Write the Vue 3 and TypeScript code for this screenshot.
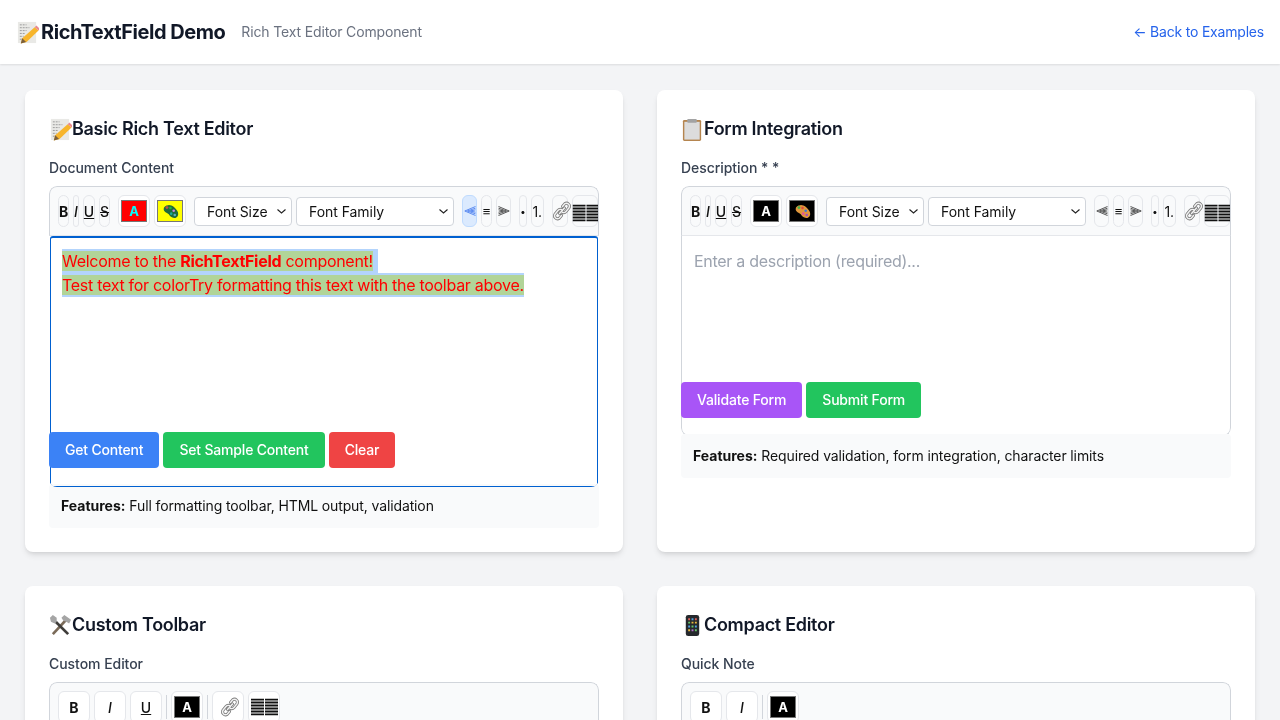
<script setup lang="ts">
type Tool =
  | { kind: 'text'; label: string; cls: string }
  | { kind: 'color'; mode: 'text' | 'back'; bg: string }
  | { kind: 'select'; label: string; cls: string; options: string[] }
  | { kind: 'icon'; icon: string; cls: string; active?: boolean }
  | { kind: 'divider' }

type Panel = {
  icon: string
  title: string
  label: string
  compact: boolean
  tools: Tool[]
  focused?: boolean
  placeholder?: string
  actions: { text: string; color: string }[]
  features?: string
}

const sizes = ['Font Size', 'Small', 'Normal', 'Large', 'Huge']
const families = ['Font Family', 'Inter', 'Roboto', 'Lato', 'Open Sans']

const fullToolbar = (fore: string, back: string, alignActive: boolean): Tool[] => [
  { kind: 'text', label: 'B', cls: 'w-b bold' },
  { kind: 'text', label: 'I', cls: 'w-i italic' },
  { kind: 'text', label: 'U', cls: 'w-u under' },
  { kind: 'text', label: 'S', cls: 'w-s strike' },
  { kind: 'color', mode: 'text', bg: fore },
  { kind: 'color', mode: 'back', bg: back },
  { kind: 'select', label: 'size', cls: 'sel-size', options: sizes },
  { kind: 'select', label: 'family', cls: 'sel-family', options: families },
  { kind: 'icon', icon: 'al', cls: 'w-al', active: alignActive },
  { kind: 'text', label: '≡', cls: 'w-ac center-glyph' },
  { kind: 'icon', icon: 'ar', cls: 'w-ar' },
  { kind: 'text', label: '•', cls: 'w-ul list-start dot' },
  { kind: 'text', label: '1.', cls: 'w-ol' },
  { kind: 'icon', icon: 'link', cls: 'w-link list-start' },
  { kind: 'icon', icon: 'table', cls: 'w-table' },
]

const panels: Panel[] = [
  {
    icon: 'memo',
    title: 'Basic Rich Text Editor',
    label: 'Document Content',
    compact: false,
    focused: true,
    tools: fullToolbar('#ff0000', '#ffff00', true),
    actions: [
      { text: 'Get Content', color: '#3b82f6' },
      { text: 'Set Sample Content', color: '#22c55e' },
      { text: 'Clear', color: '#ef4444' },
    ],
    features: 'Full formatting toolbar, HTML output, validation',
  },
  {
    icon: 'clipboard',
    title: 'Form Integration',
    label: 'Description * *',
    compact: true,
    placeholder: 'Enter a description (required)...',
    tools: fullToolbar('#000000', '#000000', false),
    actions: [
      { text: 'Validate Form', color: '#a855f7' },
      { text: 'Submit Form', color: '#22c55e' },
    ],
    features: 'Required validation, form integration, character limits',
  },
  {
    icon: 'tools',
    title: 'Custom Toolbar',
    label: 'Custom Editor',
    compact: true,
    tools: [
      { kind: 'text', label: 'B', cls: 'wide bold' },
      { kind: 'text', label: 'I', cls: 'wide italic' },
      { kind: 'text', label: 'U', cls: 'wide under' },
      { kind: 'divider' },
      { kind: 'color', mode: 'text', bg: '#000000' },
      { kind: 'divider' },
      { kind: 'icon', icon: 'link', cls: 'wide' },
      { kind: 'icon', icon: 'table', cls: 'wide' },
    ],
    actions: [],
  },
  {
    icon: 'phone',
    title: 'Compact Editor',
    label: 'Quick Note',
    compact: true,
    tools: [
      { kind: 'text', label: 'B', cls: 'wide bold' },
      { kind: 'text', label: 'I', cls: 'wide italic' },
      { kind: 'divider' },
      { kind: 'color', mode: 'text', bg: '#000000' },
    ],
    actions: [],
  },
]
</script>

<template>
  <svg class="defs" aria-hidden="true">
    <defs>
      <symbol id="memo" viewBox="0 0 24 24">
        <rect x="2" y="1" width="19" height="22" fill="#e9e9e6" />
        <path d="M4 4h7M4 7h10M4 10h7M4 13h5M4 16h4M4 19h3" stroke="#9a9a9a" stroke-width="1" stroke-dasharray="2 1" />
        <path d="M19.500 6.500l4 3.500L11 22l-6 1.500 1.500-5.500z" fill="#f7b52c" />
        <path d="M19.500 6.500l1.800-1.800 3.700 3.500-1.500 1.800z" fill="#e98a8f" />
        <path d="M6.500 18L5 23.500l5.500-1.500z" fill="#7a5f3c" />
      </symbol>
      <symbol id="clipboard" viewBox="0 0 24 24">
        <rect x="2" y="2" width="19" height="22" rx="1.500" fill="#b5854f" />
        <rect x="3.500" y="4" width="16" height="18.500" fill="#dcdcdc" />
        <rect x="6.500" y="1" width="10" height="4" rx="1" fill="#a3a3a3" />
      </symbol>
      <symbol id="tools" viewBox="0 0 24 24">
        <path d="M3 20L17 5l2 2L5 22z" fill="#7a6a58" />
        <path d="M13 4l3-3 7 5-2 4-3-2-3-1z" fill="#a5a5a5" />
        <path d="M21 20L8 7 6 9l13 13z" fill="#3f3d3a" />
        <path d="M1 4l3-3 4 3v4L6 10 2 8z" fill="#a5a5a5" />
      </symbol>
      <symbol id="phone" viewBox="0 0 24 24">
        <rect x="5" y="1" width="14" height="22" rx="2.500" fill="#25282c" />
        <path d="M7.500 4.500h2v2h-2zM14.500 4.500h2v2h-2z" fill="#e0605a" />
        <path d="M11 4.500h2v2h-2zM7.500 12h2v2h-2zM14.500 12h2v2h-2z" fill="#4fa3e0" />
        <path d="M7.500 8h2v2h-2zM11 12h2v2h-2zM14.500 16h2v2h-2z" fill="#67c46a" />
        <path d="M11 8h2v2h-2zM14.500 8h2v2h-2zM7.500 16h2v2h-2z" fill="#e8b93f" />
        <path d="M11 16h2v2h-2z" fill="#b46fd0" />
      </symbol>
      <symbol id="palette" viewBox="0 0 24 24">
        <path d="M9 3C4 3 1 7 3 11c1.500 3 5 3 6.500 5 1.500 3 5 6 9.500 5 4-1 5-6 2.500-10C19 7 14 2.500 9 3z" fill="#e0973c" />
        <circle cx="7" cy="6.500" r="2" fill="#3fb24d" />
        <circle cx="12" cy="7" r="1.800" fill="#e0483f" />
        <circle cx="16.500" cy="11" r="1.800" fill="#3c78d8" />
        <circle cx="13" cy="15" r="1.800" fill="#e8549a" />
        <circle cx="18" cy="17" r="1.800" fill="#a44fc0" />
      </symbol>
      <symbol id="al" viewBox="0 0 12 10">
        <path d="M11.500.5L.8 5l10.700 4.500M11.500 2.200L3.500 5l8 2.800M11.500 3.800L6.500 5l5 1.200" fill="none" stroke="currentColor" stroke-width=".7" />
      </symbol>
      <symbol id="ar" viewBox="0 0 12 10">
        <path d="M.5.500L11.200 5 .5 9.500M.5 2.200L8.500 5l-8 2.800M.5 3.800L5.500 5l-5 1.200" fill="none" stroke="currentColor" stroke-width=".7" />
      </symbol>
      <symbol id="link" viewBox="0 0 20 20">
        <path d="M10.500 5.500l2.200-2.700a3 3 0 0 1 4.300 4l-3 3.700a3 3 0 0 1-3.600.8M9.500 14.500l-2.200 2.700a3 3 0 0 1-4.300-4l3-3.700a3 3 0 0 1 3.600-.8M7.500 12.500l5-5.500" fill="none" stroke="#7c7c7c" stroke-width="3" stroke-linecap="round" />
        <path d="M10.500 5.500l2.200-2.700a3 3 0 0 1 4.300 4l-3 3.700a3 3 0 0 1-3.600.8M9.500 14.500l-2.200 2.700a3 3 0 0 1-4.300-4l3-3.700a3 3 0 0 1 3.600-.8M7.500 12.500l5-5.500" fill="none" stroke="#f2f2f2" stroke-width="1.400" stroke-linecap="round" />
      </symbol>
      <symbol id="table" viewBox="0 0 27 17">
        <path d="M0 1h13M14 1h13M0 4h13M14 4h13M0 7h13M14 7h13M0 10h13M14 10h13M0 13h13M14 13h13M0 16h13M14 16h13" stroke="#111" stroke-width="2" />
      </symbol>
    </defs>
  </svg>

  <div class="page">
    <header class="top">
      <div class="brand">
        <svg class="emoji-lg"><use href="#memo" /></svg>
        <h1>RichTextField Demo</h1>
        <span class="tagline">Rich Text Editor Component</span>
      </div>
      <a class="back" href="#">← Back to Examples</a>
    </header>

    <main class="grid">
      <section v-for="panel in panels" :key="panel.title" class="card">
        <h2 class="card-title">
          <svg class="emoji"><use :href="'#' + panel.icon" /></svg>{{ panel.title }}
        </h2>
        <label class="field-label">{{ panel.label }}</label>

        <div class="editor" :class="{ tall: !panel.compact }">
          <div class="toolbar" :class="{ loose: panel.tools.length < 10 }">
            <template v-for="(tool, i) in panel.tools" :key="i">
              <button v-if="tool.kind === 'text'" type="button" class="tool" :class="tool.cls">{{ tool.label }}</button>
              <button
                v-else-if="tool.kind === 'icon'"
                type="button"
                class="tool"
                :class="[tool.cls, { active: tool.active }]"
              >
                <svg :class="'ico-' + tool.icon"><use :href="'#' + tool.icon" /></svg>
              </button>
              <span v-else-if="tool.kind === 'color'" class="color" :class="{ first: tool.mode === 'text' }">
                <span class="swatch" :style="{ background: tool.bg }">
                  <b v-if="tool.mode === 'text'" class="blend">A</b>
                  <svg v-else class="blend palette"><use href="#palette" /></svg>
                </span>
              </span>
              <select v-else-if="tool.kind === 'select'" class="select" :class="tool.cls" :aria-label="tool.label">
                <option v-for="opt in tool.options" :key="opt">{{ opt }}</option>
              </select>
              <span v-else class="divider"></span>
            </template>
          </div>
          <div class="content" :class="{ focused: panel.focused }">
            <template v-if="panel.focused">
              <div class="sel-line trail">
                <span class="mark">Welcome to the <strong>RichTextField</strong> component!</span>
              </div>
              <div class="sel-line">
                <span class="mark">Test text for colorTry formatting this text with the toolbar above.</span>
              </div>
            </template>
            <p v-else-if="panel.placeholder" class="placeholder">{{ panel.placeholder }}</p>
          </div>
        </div>

        <div v-if="panel.actions.length" class="actions">
          <button
            v-for="action in panel.actions"
            :key="action.text"
            type="button"
            class="action"
            :style="{ background: action.color }"
          >
            {{ action.text }}
          </button>
        </div>

        <p v-if="panel.features" class="features"><strong>Features:</strong> {{ panel.features }}</p>
      </section>
    </main>
  </div>
</template>

<style>
html,
body {
  margin: 0;
  overflow: hidden;
  background: #f3f4f6;
}
</style>

<style scoped>
.defs {
  position: absolute;
  width: 0;
  height: 0;
}

.page {
  min-height: 720px;
  background: #f3f4f6;
  color: #111827;
  font-family: Inter, 'Noto Sans', sans-serif;
}

.top {
  display: flex;
  align-items: center;
  justify-content: space-between;
  height: 64px;
  padding: 0 16px;
  background: #fff;
  box-shadow: 0 1px 2px rgb(0 0 0 / 10%);
}

.brand {
  display: flex;
  align-items: center;
}

.emoji-lg {
  flex: none;
  width: 23px;
  height: 23px;
  margin-right: 2px;
}

.brand h1 {
  margin: 0;
  font-size: 20px;
  font-weight: 700;
  letter-spacing: -0.46px;
  line-height: 28px;
}

.tagline {
  margin: 0 0 1px 16px;
  color: #6b7280;
  font-size: 14px;
  letter-spacing: -0.15px;
}

.back {
  margin-bottom: 1px;
  color: #2563eb;
  font-size: 14px;
  letter-spacing: -0.2px;
  text-decoration: none;
}

.grid {
  display: grid;
  grid-template-columns: 598px 598px;
  gap: 34px;
  padding: 26px 25px 25px;
}

.card {
  display: flex;
  flex-direction: column;
  align-items: stretch;
  padding: 24px;
  border-radius: 8px;
  background: #fff;
  box-shadow:
    0 4px 6px -1px rgb(0 0 0 / 10%),
    0 2px 4px -2px rgb(0 0 0 / 10%);
}

.card-title {
  display: flex;
  align-items: center;
  margin: 1px 0 15px;
  font-size: 18px;
  font-weight: 600;
  letter-spacing: -0.3px;
  line-height: 28px;
}

.emoji {
  flex: none;
  width: 23px;
  height: 23px;
}

.field-label {
  margin-bottom: 8px;
  color: #374151;
  font-size: 14px;
  font-weight: 500;
  letter-spacing: -0.05px;
  line-height: 20px;
}

.editor {
  display: flex;
  flex-direction: column;
  height: 250px;
  margin-bottom: -54px;
  overflow: hidden;
  border-radius: 8px;
}

.editor.tall {
  position: relative;
  z-index: 1;
  height: 301px;
  margin-bottom: -55px;
}

.toolbar {
  display: flex;
  flex: none;
  align-items: center;
  gap: 4px;
  box-sizing: border-box;
  height: 50px;
  padding: 0 0 0 8px;
  overflow: hidden;
  border: 1px solid #d1d5db;
  border-bottom-color: #e5e7eb;
  border-radius: 8px 8px 0 0;
  background: #f9fafb;
}

.tool {
  display: flex;
  flex: none;
  align-items: center;
  justify-content: center;
  height: 32px;
  padding: 0;
  border: 1px solid #e5e7eb;
  border-radius: 6px;
  background: transparent;
  color: #111;
  font-family: Inter, sans-serif;
  font-size: 14px;
  font-weight: 500;
  overflow: visible;
}

.tool.active {
  border-color: #bfdbfe;
  background: #dbeafe;
  color: #2563eb;
}

.bold {
  font-weight: 700;
}

.italic {
  font-style: italic;
}

.under {
  text-decoration: underline;
}

.strike {
  text-decoration: line-through;
}

.w-b {
  width: 11px;
}

.w-i {
  width: 6px;
}

.w-u {
  width: 12px;
}

.w-s {
  width: 11px;
}

.w-al,
.w-ar {
  width: 15px;
}

.w-ac {
  width: 11px;
}

.w-ul {
  width: 8px;
}

.w-ol {
  width: 12.500px;
  font-weight: 400;
}

.w-link {
  width: 16px;
}

.w-table {
  width: 26px;
}

.wide {
  width: 32px;
  background: #fff;
}

.list-start {
  margin-left: 4px;
}

.dot {
  font-size: 10px;
}

.ico-al,
.ico-ar {
  flex: none;
  width: 12px;
  height: 10px;
}

.ico-link {
  flex: none;
  width: 20px;
  height: 20px;
  transform: translateX(2px);
}

.ico-table {
  flex: none;
  width: 27px;
  height: 17px;
  transform: translateY(-0.5px);
}

.w-table .ico-table {
  transform: translate(1.500px, 1.500px);
}

.color {
  display: flex;
  flex: none;
  align-items: center;
  justify-content: center;
  box-sizing: border-box;
  width: 32px;
  height: 32px;
  border: 1px solid #e5e7eb;
  border-radius: 6px;
  background: #fff;
}

.color.first {
  margin-left: 4px;
}

.loose .color.first {
  margin-left: 0;
}

.swatch {
  display: flex;
  align-items: center;
  justify-content: center;
  box-sizing: border-box;
  width: 26px;
  height: 22px;
  border: 1px solid #767676;
}

.blend {
  color: #fff;
  font-size: 13px;
  font-weight: 700;
  mix-blend-mode: difference;
}

.palette {
  width: 17px;
  height: 17px;
}

.select {
  flex: none;
  box-sizing: border-box;
  height: 29px;
  padding: 0 0 0 12px;
  border: 1px solid #d1d5db;
  border-radius: 4px;
  background: #fff url("data:image/svg+xml,%3Csvg xmlns='http://www.w3.org/2000/svg' width='9' height='5'%3E%3Cpath d='M.5.500l4 3.500 4-3.500' fill='none' stroke='%23222' stroke-width='1.100'/%3E%3C/svg%3E") no-repeat right 5px center;
  color: #111;
  font-family: Inter, sans-serif;
  font-size: 14px;
  letter-spacing: -0.05px;
  appearance: none;
}

.sel-size {
  width: 98px;
  margin-left: 4px;
}

.sel-family {
  width: 158px;
  margin-right: 4px;
}

.center-glyph {
  font-size: 13px;
}

.divider {
  flex: none;
  width: 1px;
  height: 24px;
  background: #d1d5db;
}

.content {
  flex: 1;
  box-sizing: border-box;
  padding: 13px 12px 12px;
  border: 1px solid #d1d5db;
  border-top: 0;
  border-radius: 0 0 8px 8px;
  font-size: 16px;
  letter-spacing: -0.285px;
  line-height: 24px;
}

.content.focused {
  margin: 0 1px;
  padding: 11px;
  border: 1px solid #0060d0;
  border-top-width: 2px;
  border-radius: 3px;
  color: #ff0000;
}

.sel-line {
  width: fit-content;
  height: 24px;
  background: #b3d4fc;
}

.sel-line.trail {
  padding-right: 5px;
}

.mark {
  background: #b1d498;
}

.placeholder {
  margin: 0;
  color: #9ca3af;
}

.actions {
  position: relative;
  z-index: 2;
  display: flex;
  gap: 4px;
  margin-bottom: 16px;
}

.action {
  height: 36px;
  padding: 0 16px 2px;
  border: 0;
  border-radius: 4px;
  color: #fff;
  font-family: Inter, sans-serif;
  font-size: 14px;
  font-weight: 500;
  letter-spacing: -0.18px;
}

.features {
  margin: 0;
  padding: 12px;
  border-radius: 4px;
  background: #f9fafb;
  color: #111;
  font-size: 14px;
  letter-spacing: -0.12px;
  line-height: 20px;
}

.features strong {
  font-weight: 700;
  letter-spacing: 0;
}
</style>
